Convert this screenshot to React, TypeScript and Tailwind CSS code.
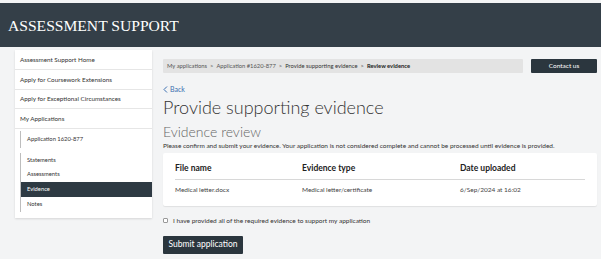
import React from "react";

const font = { fontFamily: "Lato, 'Noto Sans', sans-serif" };

export default function App() {
  return (
    <div className="w-[601px] h-[259px] overflow-hidden bg-[#f3f4f5] pt-[3px]" style={font}>
      <header className="h-[44px] bg-[#343f48] flex items-center pl-[8px]">
        <h1
          className="text-white text-[15.6px] leading-none mt-[2px]"
          style={{ fontFamily: "'Liberation Serif', 'DejaVu Serif', serif" }}
        >
          ASSESSMENT SUPPORT
        </h1>
      </header>
      <div className="flex">
        <aside className="ml-[15px] mt-[3px] w-[137px] h-[168px] bg-white shadow-[0_1px_2px_rgba(0,0,0,0.12)] text-[6.3px] text-[#333]">
          <div className="h-[20px] flex items-center pl-[5px] border-b border-[#e6e6e6]">Assessment Support Home</div>
          <div className="h-[19.5px] flex items-center pl-[5px] border-b border-[#e6e6e6]">Apply for Coursework Extensions</div>
          <div className="h-[19.5px] flex items-center pl-[5px] border-b border-[#e6e6e6]">Apply for Exceptional Circumstances</div>
          <div className="h-[20px] flex items-center pl-[5px] border-b border-[#e6e6e6]">My Applications</div>
          <div className="pl-[5px] pt-[2px] text-[5.8px]">
            <div className="border-l border-[#bdbdbd] h-[17px] flex items-center pl-[6px]">Application 1620-877</div>
            <div className="border-l border-[#bdbdbd] mt-[5px]">
              <div className="h-[14.5px] flex items-center pl-[6px]">Statements</div>
              <div className="h-[14.5px] flex items-center pl-[6px]">Assessments</div>
              <div className="h-[15px] flex items-center pl-[6px] bg-[#2e3a43] text-white">Evidence</div>
              <div className="h-[14.5px] flex items-center pl-[6px]">Notes</div>
            </div>
          </div>
        </aside>
        <main className="ml-[11px] mr-[4px] flex-1 pt-[12px]">
          <div className="flex items-center gap-[8px]">
            <div className="flex-1 h-[14px] bg-[#e3e3e3] rounded-[1px] flex items-center pl-[4px] text-[5.8px] text-[#555] gap-[3px]">
              <span>My applications</span>
              <span>&gt;</span>
              <span>Application #1620-877</span>
              <span>&gt;</span>
              <span className="text-[#333]">Provide supporting evidence</span>
              <span>&gt;</span>
              <span className="text-[#222] font-bold">Review evidence</span>
            </div>
            <button className="w-[66px] h-[14px] bg-[#2b363e] text-white text-[6.5px] rounded-[1px]">Contact us</button>
          </div>
          <div className="mt-[11px] flex items-center gap-[2px] text-[#3a6fb0] text-[7px]">
            <svg width="5" height="7" viewBox="0 0 5 7"><path d="M4 0.5 L1 3.5 L4 6.5" fill="none" stroke="#3a6fb0" strokeWidth="1" /></svg>
            <span>Back</span>
          </div>
          <h2 className="text-[18px] font-light text-[#333] leading-none mt-[3px]">Provide supporting evidence</h2>
          <h3 className="text-[14px] font-light text-[#666] leading-none mt-[9px]">Evidence review</h3>
          <p className="text-[6.5px] text-[#333] mt-[4px] leading-none">
            Please confirm and submit your evidence. Your application is not considered complete and cannot be processed until evidence is provided.
          </p>
          <div className="mt-[4px] bg-white rounded-[2px] shadow-[0_1px_1px_rgba(0,0,0,0.08)] h-[53px] px-[12px] pt-[9px]">
            <div className="grid grid-cols-[127px_158px_1fr] border-b border-[#d8d8d8] pb-[4px] text-[8.5px] font-bold text-[#222]">
              <div>File name</div>
              <div>Evidence type</div>
              <div>Date uploaded</div>
            </div>
            <div className="grid grid-cols-[127px_158px_1fr] pt-[5px] text-[6.5px] text-[#444]">
              <div>Medical letter.docx</div>
              <div>Medical letter/certificate</div>
              <div>6/Sep/2024 at 16:02</div>
            </div>
          </div>
          <label className="flex items-center mt-[10px] text-[6.5px] text-[#333]">
            <span className="w-[5px] h-[5px] border border-[#999] bg-white rounded-[1px] mr-[5px]" />
            I have provided all of the required evidence to support my application
          </label>
          <button className="mt-[10px] w-[80px] h-[18px] bg-[#2b363e] text-white text-[8.5px] rounded-[1px]">Submit application</button>
        </main>
      </div>
    </div>
  );
}
